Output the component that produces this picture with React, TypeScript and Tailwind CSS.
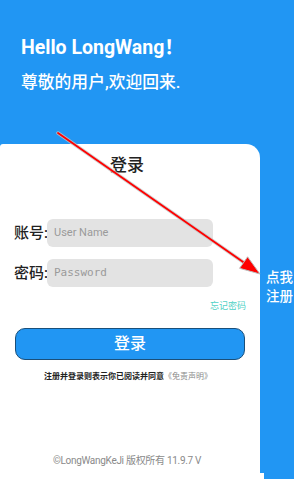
import React from "react";

const sans = { fontFamily: 'Roboto, "Noto Sans CJK SC", sans-serif' };

export default function App() {
  return (
    <div
      className="relative w-[294px] h-[479px] overflow-hidden bg-[#2196f3] flex flex-col"
      style={sans}
    >
      <div className="h-[144px] shrink-0 pl-[21px] pt-[36px] text-white">
        <div className="text-[19.5px] leading-[24px] font-bold">Hello LongWang！</div>
        <div className="mt-[11px] text-[16.8px] leading-[22px] font-medium">尊敬的用户,欢迎回来.</div>
      </div>
      <div className="flex flex-1 min-h-0">
        <div className="w-[260px] shrink-0 bg-white rounded-tr-[14px] rounded-tl-[3px] flex flex-col">
          <div className="pt-[9px] text-center text-[17px] leading-[24px] font-medium text-[#222] pr-[6px]">登录</div>
          <div className="mt-[42px] flex items-center pl-[14px]">
            <div className="w-[33px] shrink-0 whitespace-nowrap text-[15px] font-medium text-[#222]">账号:</div>
            <div className="w-[166px] shrink-0 h-[28px] rounded-[6px] bg-[#e3e3e3] flex items-center pl-[7px] text-[11px] text-[#9a9a9a]">
              User Name
            </div>
          </div>
          <div className="mt-[12px] flex items-center pl-[14px]">
            <div className="w-[33px] shrink-0 whitespace-nowrap text-[15px] font-medium text-[#222]">密码:</div>
            <div
              className="w-[166px] shrink-0 h-[28px] rounded-[6px] bg-[#e3e3e3] flex items-center pl-[7px] text-[11px] text-[#9a9a9a]"
              style={{ fontFamily: '"DejaVu Sans Mono", monospace' }}
            >
              Password
            </div>
          </div>
          <div className="mt-[13px] pr-[14px] text-right text-[9px] leading-[12px] text-[#4fd1c5]">忘记密码</div>
          <div className="mt-[16px] mx-[15px] h-[32px] rounded-[10px] bg-[#2196f3] border border-[#1a4f7a] flex items-center justify-center text-white text-[16px] font-medium">
            登录
          </div>
          <div className="mt-[12px] text-center text-[8px] leading-[10px] pr-[4px] whitespace-nowrap">
            <span className="font-bold text-[#222]">注册并登录则表示你已阅读并同意</span>
            <span className="text-[#8a8a8a]">《免责声明》</span>
          </div>
          <div className="mt-[72px] text-center text-[10px] leading-[14px] tracking-[-0.3px] text-[#8a8a8a] pr-[6px] whitespace-nowrap">
            ©LongWangKeJi 版权所有 11.9.7 V
          </div>
        </div>
        <div className="flex-1 bg-[#2196f3] rounded-bl-[6px] pt-[124px] pl-[6px] text-white text-[13.5px] leading-[19px] font-medium whitespace-nowrap">
          <div>点我</div>
          <div>注册</div>
        </div>
      </div>
      <div className="absolute bottom-0 left-[258px] w-[6px] h-[6px] bg-white" style={{ zIndex: 0 }} />
      <svg className="absolute left-0 top-0" width="294" height="479" viewBox="0 0 294 479">
        <line x1="58" y1="133" x2="246" y2="264" stroke="#c4c4c4" strokeWidth="3.5" strokeLinecap="round" opacity="0.8" />
        <line x1="58" y1="133" x2="246" y2="264" stroke="#ff0000" strokeWidth="1.8" strokeLinecap="round" />
        <polygon points="260,274 239.6,268.3 247.6,256.8" fill="#ff0000" stroke="#bdbdbd" strokeWidth="1" />
      </svg>
    </div>
  );
}
